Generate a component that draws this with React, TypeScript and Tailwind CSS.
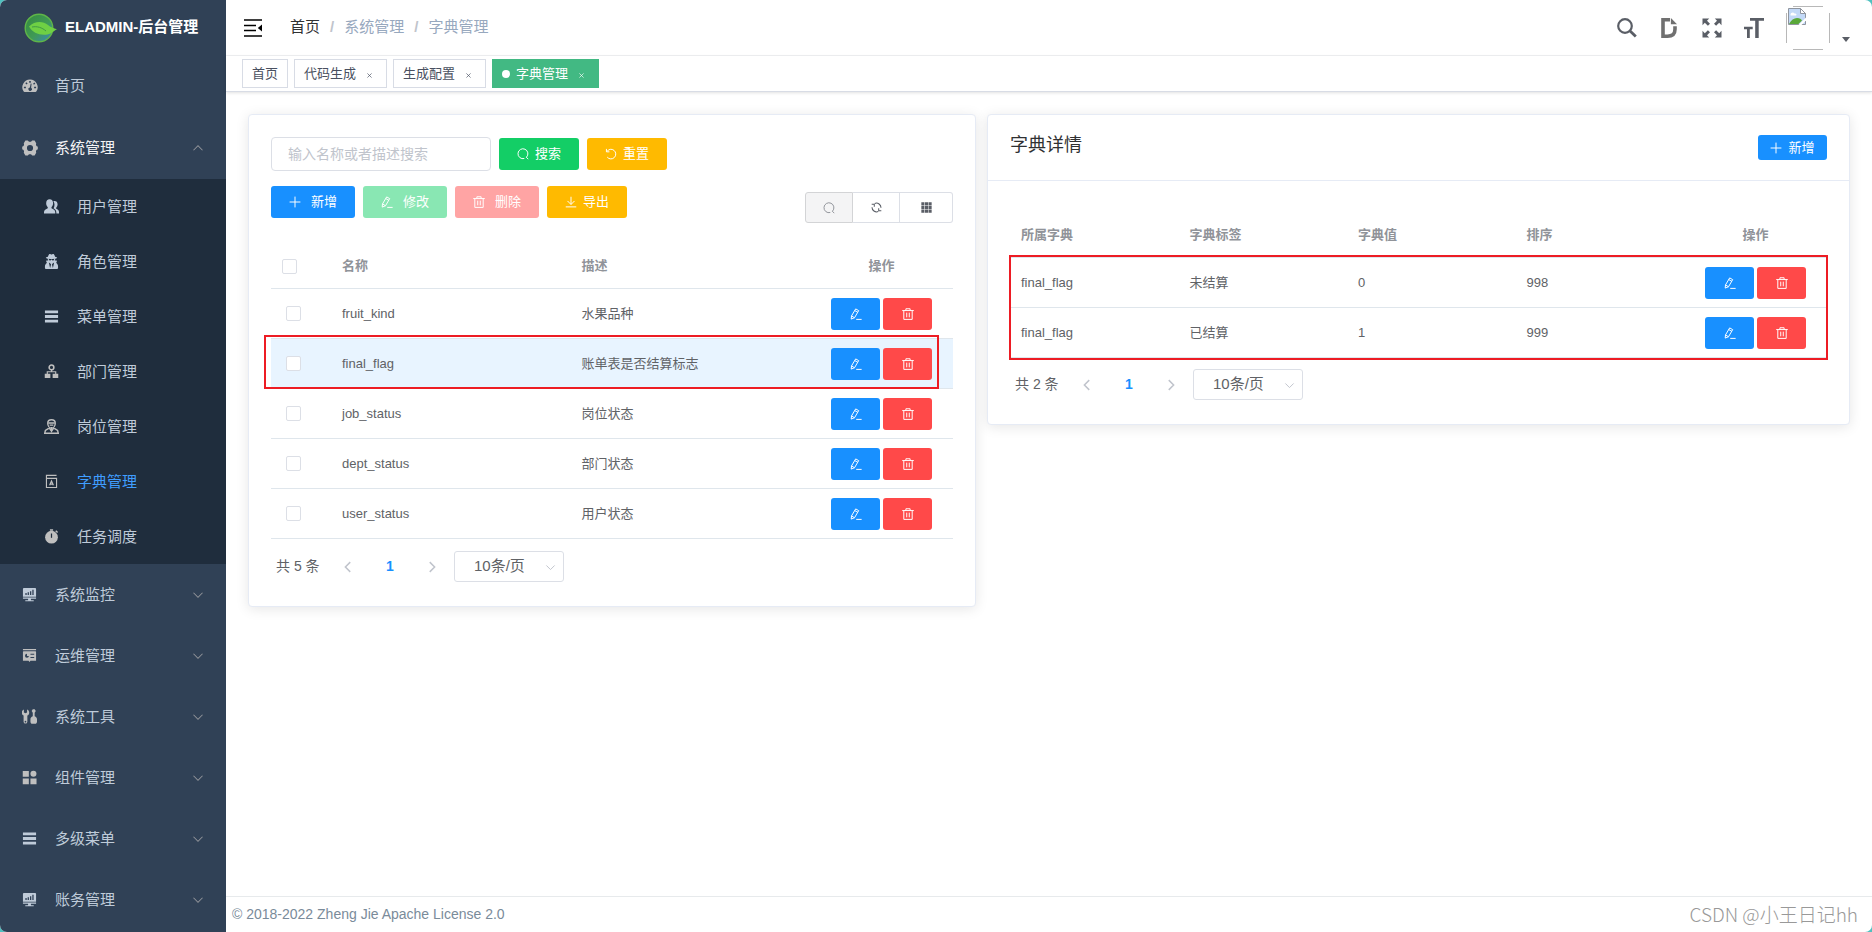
import React, { useState } from 'react';
import { FaUserSecret } from 'react-icons/fa';

type IconProps = { className?: string };

const Svg = ({ className = '', children, box = '0 0 16 16' }: IconProps & { children: React.ReactNode; box?: string }) => (
  <svg viewBox={box} className={'shrink-0 ' + className} fill="none" stroke="currentColor" aria-hidden="true">
    {children}
  </svg>
);

/* ---------- thin line icons ---------- */
const SearchThin = ({ className }: IconProps) => (
  <Svg className={className}>
    <path d="M9.700 14A6.600 6.600 0 1 1 12.600 12.300M12.300 12.200l2.700 2.700" strokeWidth="1.300" />
  </Svg>
);
const PlusThin = ({ className }: IconProps) => (
  <Svg className={className}>
    <path d="M8 .8v14.400M.8 8h14.400" strokeWidth="1.300" />
  </Svg>
);
const EditThin = ({ className }: IconProps) => (
  <Svg className={className}>
    <path d="M7.600 1.200 11.600 3.500 6 13 1.600 14.800 2 10.600zM6.300 3.400l4 2.300M2 10.600l4 2.400M8.300 15.200h7.200" strokeWidth="1.300" strokeLinejoin="round" />
  </Svg>
);
const TrashThin = ({ className }: IconProps) => (
  <Svg className={className}>
    <path d="M.3 3.400h15.400M5.200 3.300V1h5.600v2.300M2.400 3.500v11.700h11.200V3.500M6.300 6.200v6.200M9.700 6.200v6.200" strokeWidth="1.300" />
  </Svg>
);
const ResetThin = ({ className }: IconProps) => (
  <Svg className={className}>
    <path d="M2.600 4.600A6.400 6.400 0 1 1 3 12.200M1.900 1.200v3.900h4" strokeWidth="1.300" />
  </Svg>
);
const RefreshThin = ({ className }: IconProps) => (
  <Svg className={className}>
    <path d="M5.500 2.100a6.600 6.600 0 0 1 9 6.400M10.500 13.900a6.600 6.600 0 0 1-9-6.400M1 3.200h3.800v3.600M15 12.800h-3.800V9.200" strokeWidth="1.500" />
  </Svg>
);
const DownloadThin = ({ className }: IconProps) => (
  <Svg className={className}>
    <path d="M8 1v10.200M3.300 6.600 8 11.300l4.700-4.700M1 14.500h14" strokeWidth="1.300" />
  </Svg>
);
const GridSolid = ({ className }: IconProps) => (
  <Svg className={className}>
    <path
      fill="currentColor"
      stroke="none"
      d="M.5.5h4.500v4.500H.5zM5.800.5h4.500v4.500H5.800zM11 .5h4.500v4.500H11zM.5 5.800h4.500v4.500H.5zM5.800 5.800h4.500v4.500H5.800zM11 5.800h4.500v4.500H11zM.5 11h4.500v4.500H.5zM5.800 11h4.500v4.500H5.800zM11 11h4.500v4.500H11z"
    />
  </Svg>
);
const Chevron = ({ className }: IconProps) => (
  <Svg className={className}>
    <path d="m2 5 6 6 6-6" strokeWidth="1.400" />
  </Svg>
);

/* ---------- sidebar icons ---------- */
const Gauge = ({ className }: IconProps) => (
  <Svg className={className}>
    <path
      fill="currentColor"
      stroke="none"
      fillRule="evenodd"
      d="M8 1.600a7.600 7.600 0 0 0-6.600 11.500c.3.600.7.900 1.200.900h10.800c.5 0 .9-.3 1.200-.9A7.600 7.600 0 0 0 8 1.600zM7.200 3h1.600v1.700H7.200zM3.300 5.300l1-1 1.300 1.300-1 1zM1.900 8.800h2v1.500h-2zM12.100 8.800h2v1.500h-2zM11.100 5.700l1.300-1.300.9 1-1.300 1.300zM8.700 5.600l.9.200-.5 4a1.700 1.700 0 1 1-1.200-.3z"
    />
  </Svg>
);
const Gear = ({ className }: IconProps) => (
  <Svg className={className}>
    <path
      fill="currentColor"
      stroke="none"
      fillRule="evenodd"
      d="M3.400.600h2.400L7 1.700h2L10.200.600h2.400l1.600 2.700-.3 1.700 1.100 1.400h.8v3.200H15l-1.100 1.400.3 1.700-1.600 2.700h-2.400L9 14.300H7l-1.200 1.100H3.400l-1.600-2.700.3-1.700L1 9.600H.2V6.400H1L2.100 5l-.3-1.700zM8 4.900a3.100 3.100 0 1 0 0 6.200 3.100 3.100 0 0 0 0-6.200z"
    />
  </Svg>
);
const People = ({ className }: IconProps) => (
  <Svg className={className}>
    <g fill="currentColor" stroke="none">
      <path d="M6 .3c2.300 0 3.700 1.700 3.700 4.100 0 1.800-.8 3.400-1.700 4.200v1.200c1.900.8 4 1.900 4 4.100v1.600H0v-1.600c0-2.200 2.100-3.300 4-4.100V8.600C3.100 7.800 2.300 6.200 2.300 4.400 2.300 2 3.700.3 6 .3z" />
      <path d="M10 2.300c2.700-.6 4.500.8 4.500 3.300 0 1.600-.7 2.900-1.500 3.600v1.100c1.600.7 3 1.600 3 3.500v1.700h-2.800c.2-2.900-.9-4.400-3-5.600 1.200-2.200 1.500-5.400-.2-7.600z" />
    </g>
  </Svg>
);
const ListBars = ({ className }: IconProps) => (
  <Svg className={className}>
    <path fill="currentColor" stroke="none" d="M1 1.500h14v3H1zM1 6.500h14v3H1zM1 11.500h14v3H1z" />
  </Svg>
);
const DeptTree = ({ className }: IconProps) => (
  <Svg className={className}>
    <circle cx="8" cy="3.600" r="2.500" strokeWidth="1.700" />
    <path d="M8 6v2.500M3.500 11V8.300h9V11" strokeWidth="1.200" />
    <path fill="currentColor" stroke="none" d="M.8 10.500h6V15h-6zM9.200 10.500h6V15h-6z" />
  </Svg>
);
const PostPerson = ({ className }: IconProps) => (
  <Svg className={className}>
    <path d="M4 4.500C4 2 5.700.8 8 .8s4 1.200 4 3.700c0 2.800-1.700 5.200-4 5.200s-4-2.400-4-5.200zM5 10 1.500 12.200.8 15.200h14.400l-.7-3L11 10M5.500 9.500 8 13l2.500-3.500" strokeWidth="1.500" />
    <path d="M4.500 4.300h7M6 6.500h4M8 8.500V12" strokeWidth="1.500" />
  </Svg>
);
const DictBook = ({ className }: IconProps) => (
  <Svg className={className}>
    <path d="M13.400 1.500H2.600v3.200h10.800v9.700H2.600V2" strokeWidth="1.200" />
    <path d="m6 12 2-4.600L10 12M6.800 10.800h2.400" strokeWidth="1.300" />
  </Svg>
);
const Timer = ({ className }: IconProps) => (
  <Svg className={className}>
    <circle cx="8" cy="8.700" r="6.800" fill="currentColor" stroke="none" />
    <path d="M6.300 1h3.400M12.500 1.800l2 1.900" strokeWidth="1.600" />
    <path d="M8 4.800v4.600" stroke="#1f2d3d" strokeWidth="1.300" />
  </Svg>
);
const Monitor = ({ className }: IconProps) => (
  <Svg className={className}>
    <path fill="currentColor" stroke="none" fillRule="evenodd" d="M2 1h12a1 1 0 0 1 1 1v8.500H1V2a1 1 0 0 1 1-1zM3.600 6.500v2H5v-2zM6 5.500v3h1.400v-3zM8.500 4.500v4h1.400v-4zM11 3v5.500h1.400V3z" />
    <path fill="currentColor" stroke="none" d="M1 11.300h14v1.200H9.500V14h3v1.200h-9V14h3v-1.500H1z" />
  </Svg>
);
const Board = ({ className }: IconProps) => (
  <Svg className={className}>
    <path fill="currentColor" stroke="none" fillRule="evenodd" d="M1 1h14v1.500H1zM1.500 3.500h13a.5.5 0 0 1 .5.500v9.500H9L8 15l-1-1.500H1V4a.5.5 0 0 1 .5-.5zM5.300 6.200a2.100 2.100 0 1 0 2.100 2.300H5.300zM9 6v1.200h4V6zM9 9.500v1.200h4V9.500z" />
  </Svg>
);
const Tools = ({ className }: IconProps) => (
  <Svg className={className}>
    <path fill="currentColor" stroke="none" fillRule="evenodd" d="M2 .4v3.200l1.700 1 1.700-1V.4C7 1.100 7.700 2.400 7.700 3.900c0 1.400-.8 2.500-2 3.100v6.500a2 2 0 1 1-4 0V7C.5 6.400-.3 5.300-.3 3.900-.3 2.400.4 1.100 2 .4zM3.700 12.600a.9.900 0 1 0 0 1.800.9.900 0 0 0 0-1.800z" />
    <path fill="currentColor" stroke="none" d="M11.500.3h2l1.200 1.700-1.200 2v3.800c1.600.4 2.500 1.700 2.500 3.400v2.300c0 1.300-.9 2.200-2 2.200h-3c-1.100 0-2-.9-2-2.200v-2.300c0-1.700.9-3 2.500-3.400V4l-1.200-2z" />
  </Svg>
);
const Blocks = ({ className }: IconProps) => (
  <Svg className={className}>
    <g fill="currentColor" stroke="none">
      <path d="M.8 1h6.500v6.300H.8zM.8 9h6.500v6.300H.8zM9 9h6.500v6.300H9z" />
      <circle cx="12.200" cy="4.100" r="3.200" />
    </g>
  </Svg>
);
const Spy = ({ className }: IconProps) => <FaUserSecret className={'shrink-0 ' + className} aria-hidden="true" />;

/* ---------- header icons ---------- */
const Leaf = ({ className }: IconProps) => (
  <svg viewBox="0 0 34 30" className={'shrink-0 ' + className} aria-hidden="true">
    <defs>
      <linearGradient id="leafGlobe" x1="0" y1="0" x2="1" y2="1">
        <stop offset="0" stopColor="#35893f" />
        <stop offset="0.55" stopColor="#3f9a55" />
        <stop offset="1" stopColor="#3a86c0" />
      </linearGradient>
    </defs>
    <circle cx="15" cy="15" r="13.800" fill="url(#leafGlobe)" stroke="#5fb548" strokeWidth="1.400" />
    <path d="M5 13.500C11 7.500 19 8 24 12c2.500 2 5.500 3.500 9 4.300-3 1.200-5 4.500-9.500 5.200C15 22.500 9 20 5 13.500z" fill="#6fd044" />
    <path d="M8 14c5-1 10 .5 14 4" stroke="#3f9a45" strokeWidth="1" fill="none" />
  </svg>
);
const FoldMenu = ({ className }: IconProps) => (
  <Svg className={className} box="0 0 18 18">
    <path d="M0 1h18M0 6.500h12M0 11.500h12M0 17h18" strokeWidth="1.500" />
    <path d="M18 5.600v6.800L13.800 9z" fill="currentColor" stroke="none" />
  </Svg>
);
const SearchBold = ({ className }: IconProps) => (
  <Svg className={className} box="0 0 20 20">
    <circle cx="8" cy="8" r="6.800" strokeWidth="2.200" />
    <path d="m12.800 12.800 6 5.800" strokeWidth="2.800" />
  </Svg>
);
const DocIcon = ({ className }: IconProps) => (
  <Svg className={className} box="0 0 16 20">
    <path d="M9 1.800H2v16.400h4.500c5 0 7.500-2.200 7.500-7V8.300" strokeWidth="3.600" />
    <path d="M9.900 0 16 6.300H9.900z" fill="currentColor" stroke="none" />
  </Svg>
);
const Fullscreen = ({ className }: IconProps) => (
  <Svg className={className} box="0 0 20 20">
    <path fill="currentColor" stroke="none" d="M.5.5h6.700L5 2.700 8 5.700 5.900 7.800 2.800 4.800.5 7.200zM19.500.5v6.700l-2.300-2.400-3.100 3L12 5.700l3-3L12.800.5zM.5 19.500v-6.700l2.300 2.400 3.100-3L8 14.300l-3 3 2.200 2.200zM19.500 19.500h-6.700l2.200-2.200-3-3 2.100-2.100 3.100 3 2.300-2.400z" />
  </Svg>
);
const FontSizeIcon = ({ className }: IconProps) => (
  <Svg className={className} box="0 0 20 20">
    <path fill="currentColor" stroke="none" d="M6 0h14v2.800h-5.300V20h-3.500V2.800H6zM0 8.700h8.700v2.500H5.800V20H3v-8.800H0z" />
  </Svg>
);
const BrokenAvatar = ({ className }: IconProps) => (
  <svg viewBox="0 0 44 44" className={className} role="img" aria-label="avatar" fill="none">
    <path d="M7 .5h30M7 43.500h30M.5 7v30M43.500 7v30" stroke="#b8b8b8" />
    <path d="M2.500 2.500h12l5 5v11h-17z" fill="#c3d9f7" stroke="#8f959e" />
    <path d="M14.500 2.500v5h5z" fill="#fff" stroke="#8f959e" />
    <path d="M4.500 8.500c0-2 3-3 4-1 2-.5 2.500 1.500 1.500 2H5c-.5 0-.5-.5-.5-1z" fill="#fff" />
    <path d="M3 18c2-4 5-6 8-6s4 1 5 2.500L12.500 18z" fill="#5aa83a" />
    <path d="M12 19.500 20 11.500v3l-5 5z" fill="#fff" />
  </svg>
);

/* ---------- data ---------- */
type MenuItem = { label: string; icon: (p: IconProps) => React.ReactElement; cool?: boolean };

const subMenu: MenuItem[] = [
  { label: '用户管理', icon: People, cool: true },
  { label: '角色管理', icon: Spy, cool: true },
  { label: '菜单管理', icon: ListBars, cool: true },
  { label: '部门管理', icon: DeptTree },
  { label: '岗位管理', icon: PostPerson },
  { label: '字典管理', icon: DictBook },
  { label: '任务调度', icon: Timer },
];
const lowerMenu: MenuItem[] = [
  { label: '系统监控', icon: Monitor, cool: true },
  { label: '运维管理', icon: Board },
  { label: '系统工具', icon: Tools },
  { label: '组件管理', icon: Blocks },
  { label: '多级菜单', icon: ListBars, cool: true },
  { label: '账务管理', icon: Monitor, cool: true },
];
const dicts = [
  { name: 'fruit_kind', desc: '水果品种' },
  { name: 'final_flag', desc: '账单表是否结算标志' },
  { name: 'job_status', desc: '岗位状态' },
  { name: 'dept_status', desc: '部门状态' },
  { name: 'user_status', desc: '用户状态' },
];
const details = [
  { dict: 'final_flag', label: '未结算', value: '0', sort: '998' },
  { dict: 'final_flag', label: '已结算', value: '1', sort: '999' },
];

/* ---------- parts ---------- */
const Sidebar = () => (
  <aside className="w-[226px] shrink-0 overflow-hidden bg-[#304156] text-[15px] text-[#bfcbd9]">
    <a href="#home" className="flex h-[55px] items-center gap-[7px] pl-6 text-white">
      <Leaf className="h-[30px] w-[34px]" />
      <span className="text-[15px] font-bold">ELADMIN-后台管理</span>
    </a>
    <nav>
      <a href="#home" className="flex h-[62px] items-center pl-[22px]">
        <Gauge className="mr-[17px] size-4 text-[#bfbfbf]" />
        首页
      </a>
      <button type="button" aria-expanded="true" className="flex h-[62px] w-full items-center pr-[22px] pl-[22px] text-[#f4f4f5]">
        <Gear className="mr-[17px] size-4 text-[#bfbfbf]" />
        系统管理
        <Chevron className="ml-auto size-3 rotate-180 text-[#909399]" />
      </button>
      <ul className="bg-[#1f2d3d]">
        {subMenu.map(({ label, icon: Icon, cool }) => (
          <li key={label}>
            <a href={'#' + label} className={'flex h-[55px] items-center pl-11 ' + (label === '字典管理' ? 'text-[#409eff]' : '')}>
              <Icon className={'mr-[18px] size-[15px] ' + (cool ? 'text-[#bfcbd9]' : 'text-[#bfbfbf]')} />
              <span className="pt-0.5">{label}</span>
            </a>
          </li>
        ))}
      </ul>
      {lowerMenu.map(({ label, icon: Icon, cool }) => (
        <button key={label} type="button" aria-expanded="false" className="flex h-[61px] w-full items-center pr-[22px] pl-[22px]">
          <Icon className={'mr-[18px] size-[15px] ' + (cool ? 'text-[#bfcbd9]' : 'text-[#bfbfbf]')} />
          <span className="pt-0.5">{label}</span>
          <Chevron className="ml-auto size-3 text-[#909399]" />
        </button>
      ))}
    </nav>
  </aside>
);

const Tag = ({ label, closable = true, active = false }: { label: string; closable?: boolean; active?: boolean }) => (
  <div
    className={
      'flex h-[29px] items-center border px-[9px] text-[13px] ' +
      (active ? 'border-[#42b983] bg-[#42b983] text-white' : 'border-[#d8dce5] bg-white text-[#495060]')
    }
  >
    {active && <span className="mr-1.5 size-2 rounded-full bg-white" />}
    <a href={'#' + label}>{label}</a>
    {closable && (
      <button type="button" aria-label={'关闭 ' + label} className="ml-1.5 flex h-4 w-[15px] items-end justify-center pb-1">
        <Svg className="size-[5px]" box="0 0 6 6">
          <path d="m.5.500 5 5m0-5-5 5" strokeWidth="0.800" />
        </Svg>
      </button>
    )}
  </div>
);

const Header = () => (
  <header className="shrink-0">
    <div className="flex h-14 items-center border-b border-[#f0f1f3] pr-[22px] pl-[18px]">
      <button type="button" aria-label="折叠菜单" className="mr-7 text-black">
        <FoldMenu className="size-[18px]" />
      </button>
      <nav className="flex items-center gap-2.5 text-[15px] text-[#97a8be]">
        <a href="#home" className="text-[#303133]">首页</a>
        <span className="font-bold text-[#c0c4cc]">/</span>
        <span>系统管理</span>
        <span className="font-bold text-[#c0c4cc]">/</span>
        <span>字典管理</span>
      </nav>
      <div className="ml-auto flex items-center text-[#5a5e66]">
        <button type="button" aria-label="搜索" className="mr-6"><SearchBold className="size-5" /></button>
        <button type="button" aria-label="文档" className="mr-[25px] text-[#707070]"><DocIcon className="h-5 w-4" /></button>
        <button type="button" aria-label="全屏" className="mr-[22px]"><Fullscreen className="size-5" /></button>
        <button type="button" aria-label="字号" className="mr-[22px]"><FontSizeIcon className="size-5" /></button>
        <button type="button" aria-label="用户菜单" className="flex items-end gap-3">
          <BrokenAvatar className="size-11" />
          <svg viewBox="0 0 8 5" className="mb-2 h-[5px] w-2" fill="currentColor" aria-hidden="true">
            <path d="M0 0h8L4 5z" />
          </svg>
        </button>
      </div>
    </div>
    <div className="flex h-9 gap-1.5 border-b border-[#d8dce5] pt-[3px] pl-4 shadow-[0_1px_3px_0_rgba(0,0,0,0.12)]">
      <Tag label="首页" closable={false} />
      <Tag label="代码生成" />
      <Tag label="生成配置" />
      <Tag label="字典管理" active />
    </div>
  </header>
);

const Checkbox = ({ label }: { label: string }) => (
  <input type="checkbox" aria-label={label} className="block size-[15px] appearance-none rounded-[2px] border border-[#dcdfe6] bg-white checked:bg-[#1890ff]" />
);

const RowActions = () => (
  <div className="flex justify-center gap-[3px] text-white">
    <button type="button" aria-label="编辑" className="flex h-8 w-[49px] items-center justify-center rounded-[3px] bg-[#1890ff]">
      <EditThin className="size-3" />
    </button>
    <button type="button" aria-label="删除" className="flex h-8 w-[49px] items-center justify-center rounded-[3px] bg-[#ff4949]">
      <TrashThin className="size-3" />
    </button>
  </div>
);

const Pagination = ({ total }: { total: number }) => (
  <div className="flex h-[31px] items-center pl-[5px] text-[14px] text-[#606266]">
    <span className="w-[60px]">共 {total} 条</span>
    <button type="button" aria-label="上一页" disabled className="flex w-6 justify-center text-[#c0c4cc]">
      <Svg className="size-3"><path d="M11 1.500 4.500 8l6.500 6.500" strokeWidth="2" /></Svg>
    </button>
    <button type="button" aria-current="page" className="w-[60px] font-bold text-[#1890ff]">1</button>
    <button type="button" aria-label="下一页" disabled className="flex w-6 justify-center text-[#c0c4cc]">
      <Svg className="size-3"><path d="M5 1.500 11.500 8 5 14.500" strokeWidth="2" /></Svg>
    </button>
    <div className="relative ml-2.5">
      <select aria-label="每页条数" className="block h-[31px] w-[110px] appearance-none rounded-[3px] border border-[#dcdfe6] bg-white pl-[19px] text-[15px] text-[#606266]">
        <option>10条/页</option>
      </select>
      <Chevron className="pointer-events-none absolute top-[11px] right-2 size-[11px] text-[#c0c4cc]" />
    </div>
  </div>
);

const cardClass = 'rounded-[4px] border border-[#e6ebf5] bg-white shadow-[0_2px_13px_0_rgba(0,0,0,0.1)]';
const th = 'h-[45px] border-b border-[#dfe6ec] px-[11px] font-bold text-[#909399]';
const td = 'h-[50px] border-b border-[#dfe6ec] px-[11px]';
const btn = 'flex h-8 items-center justify-center rounded-[3px] text-[13px] text-white';

const DictCard = () => {
  const [query, setQuery] = useState('');
  return (
    <section className={cardClass + ' px-[22px] pt-[22px] pb-6'}>
      <div className="flex items-center gap-2">
        <input
          type="text"
          aria-label="输入名称或者描述搜索"
          placeholder="输入名称或者描述搜索"
          value={query}
          onChange={(e) => setQuery(e.target.value)}
          className="h-[34px] w-[220px] rounded-[4px] border border-[#dcdfe6] px-4 text-[14px] text-[#606266] outline-none placeholder:text-[#c0c4cc]"
        />
        <button type="button" className={btn + ' w-20 gap-1.5 bg-[#13ce66]'}><SearchThin className="size-3" />搜索</button>
        <button type="button" className={btn + ' w-20 gap-1.5 bg-[#ffba00]'}><ResetThin className="size-3" />重置</button>
      </div>
      <div className="mt-[15px] flex items-start gap-2">
        <button type="button" className={btn + ' w-[84px] gap-2.5 bg-[#1890ff]'}><PlusThin className="size-3" />新增</button>
        <button type="button" disabled className={btn + ' w-[84px] gap-2.5 bg-[#89e7b3]'}><EditThin className="size-3" />修改</button>
        <button type="button" disabled className={btn + ' w-[84px] gap-2.5 bg-[#ffa4a4]'}><TrashThin className="size-3" />删除</button>
        <button type="button" className={btn + ' w-20 gap-1.5 bg-[#ffba00]'}><DownloadThin className="size-3" />导出</button>
        <div className="mt-1.5 ml-auto flex h-[31px] text-[#5a5e66]">
          <button type="button" aria-label="搜索栏" className="flex w-12 items-center justify-center rounded-l-[3px] border border-[#d3d4d6] bg-[#f4f4f5] text-[#909399]">
            <SearchThin className="size-3" />
          </button>
          <button type="button" aria-label="刷新" className="flex w-[47px] items-center justify-center border-y border-r border-[#dcdfe6]">
            <RefreshThin className="size-[11px]" />
          </button>
          <button type="button" aria-label="列设置" className="flex w-[53px] items-center justify-center rounded-r-[3px] border-y border-r border-[#dcdfe6]">
            <GridSolid className="size-[11px]" />
          </button>
        </div>
      </div>
      <div className="relative mt-[21px]">
        <table className="w-full table-fixed border-separate border-spacing-0 text-[13px] text-[#606266]">
          <thead>
            <tr>
              <th className={th + ' w-[60px] text-left'}><Checkbox label="全选" /></th>
              <th className={th + ' text-left'}>名称</th>
              <th className={th + ' text-left'}>描述</th>
              <th className={th + ' w-[143px] text-center'}>操作</th>
            </tr>
          </thead>
          <tbody>
            {dicts.map((d) => (
              <tr key={d.name} className={d.name === 'final_flag' ? 'bg-[#e8f4ff]' : ''}>
                <td className="h-[50px] border-b border-[#dfe6ec] pl-[15px]">
                  <Checkbox label={d.name} />
                </td>
                <td className={td}>{d.name}</td>
                <td className={td}>{d.desc}</td>
                <td className={td}><RowActions /></td>
              </tr>
            ))}
          </tbody>
        </table>
        <div className="pointer-events-none absolute top-[91px] right-3.5 -left-[7px] h-[54px] border-2 border-[#ed1c24]" />
      </div>
      <div className="mt-3">
        <Pagination total={5} />
      </div>
    </section>
  );
};

const DetailCard = () => (
  <section className={cardClass}>
    <div className="flex h-[66px] items-start justify-between border-b border-[#e6ebf5] px-[22px] pt-5">
      <h2 className="text-[18px] leading-5 text-[#303133]">字典详情</h2>
      <button type="button" className="flex h-[25px] w-[69px] items-center justify-center gap-1.5 rounded-[3px] bg-[#1890ff] text-[13px] text-white">
        <PlusThin className="size-3" />新增
      </button>
    </div>
    <div className="px-[22px] pt-8 pb-6">
      <div className="relative">
        <table className="w-full table-fixed border-separate border-spacing-0 text-[13px] text-[#606266]">
          <thead>
            <tr>
              <th className={th + ' text-left'}>所属字典</th>
              <th className={th + ' text-left'}>字典标签</th>
              <th className={th + ' text-left'}>字典值</th>
              <th className={th + ' text-left'}>排序</th>
              <th className={th + ' w-[143px] text-center'}>操作</th>
            </tr>
          </thead>
          <tbody>
            {details.map((d) => (
              <tr key={d.value}>
                <td className={td}>{d.dict}</td>
                <td className={td}>{d.label}</td>
                <td className={td}>{d.value}</td>
                <td className={td}>{d.sort}</td>
                <td className={td}><RowActions /></td>
              </tr>
            ))}
          </tbody>
        </table>
        <div className="pointer-events-none absolute -inset-x-px top-[42px] -bottom-0.5 border-2 border-[#ed1c24]" />
      </div>
      <div className="mt-[11px]">
        <Pagination total={2} />
      </div>
    </div>
  </section>
);

export default function App() {
  return (
    <div className="h-screen bg-[#4fc1c0] font-['Liberation_Sans','Noto_Sans_CJK_SC',sans-serif]">
      <div className="relative flex h-full overflow-hidden rounded-[7px] bg-white">
        <Sidebar />
        <div className="flex min-w-0 flex-1 flex-col">
          <Header />
          <main className="grid flex-1 grid-cols-[728fr_863fr] items-start gap-[11px] px-[22px] pt-[22px]">
            <DictCard />
            <DetailCard />
          </main>
          <footer className="flex h-9 shrink-0 items-center border-t border-[#e7eaec] pl-[6px] text-[14px] text-[#7a8b9a]">
            © 2018-2022 Zheng Jie Apache License 2.0
          </footer>
        </div>
        <div className="pointer-events-none absolute right-3.5 bottom-1 font-['Noto_Sans_CJK_SC',sans-serif] text-[19px] text-[#999] font-light">
          CSDN @小王日记hh
        </div>
      </div>
    </div>
  );
}
